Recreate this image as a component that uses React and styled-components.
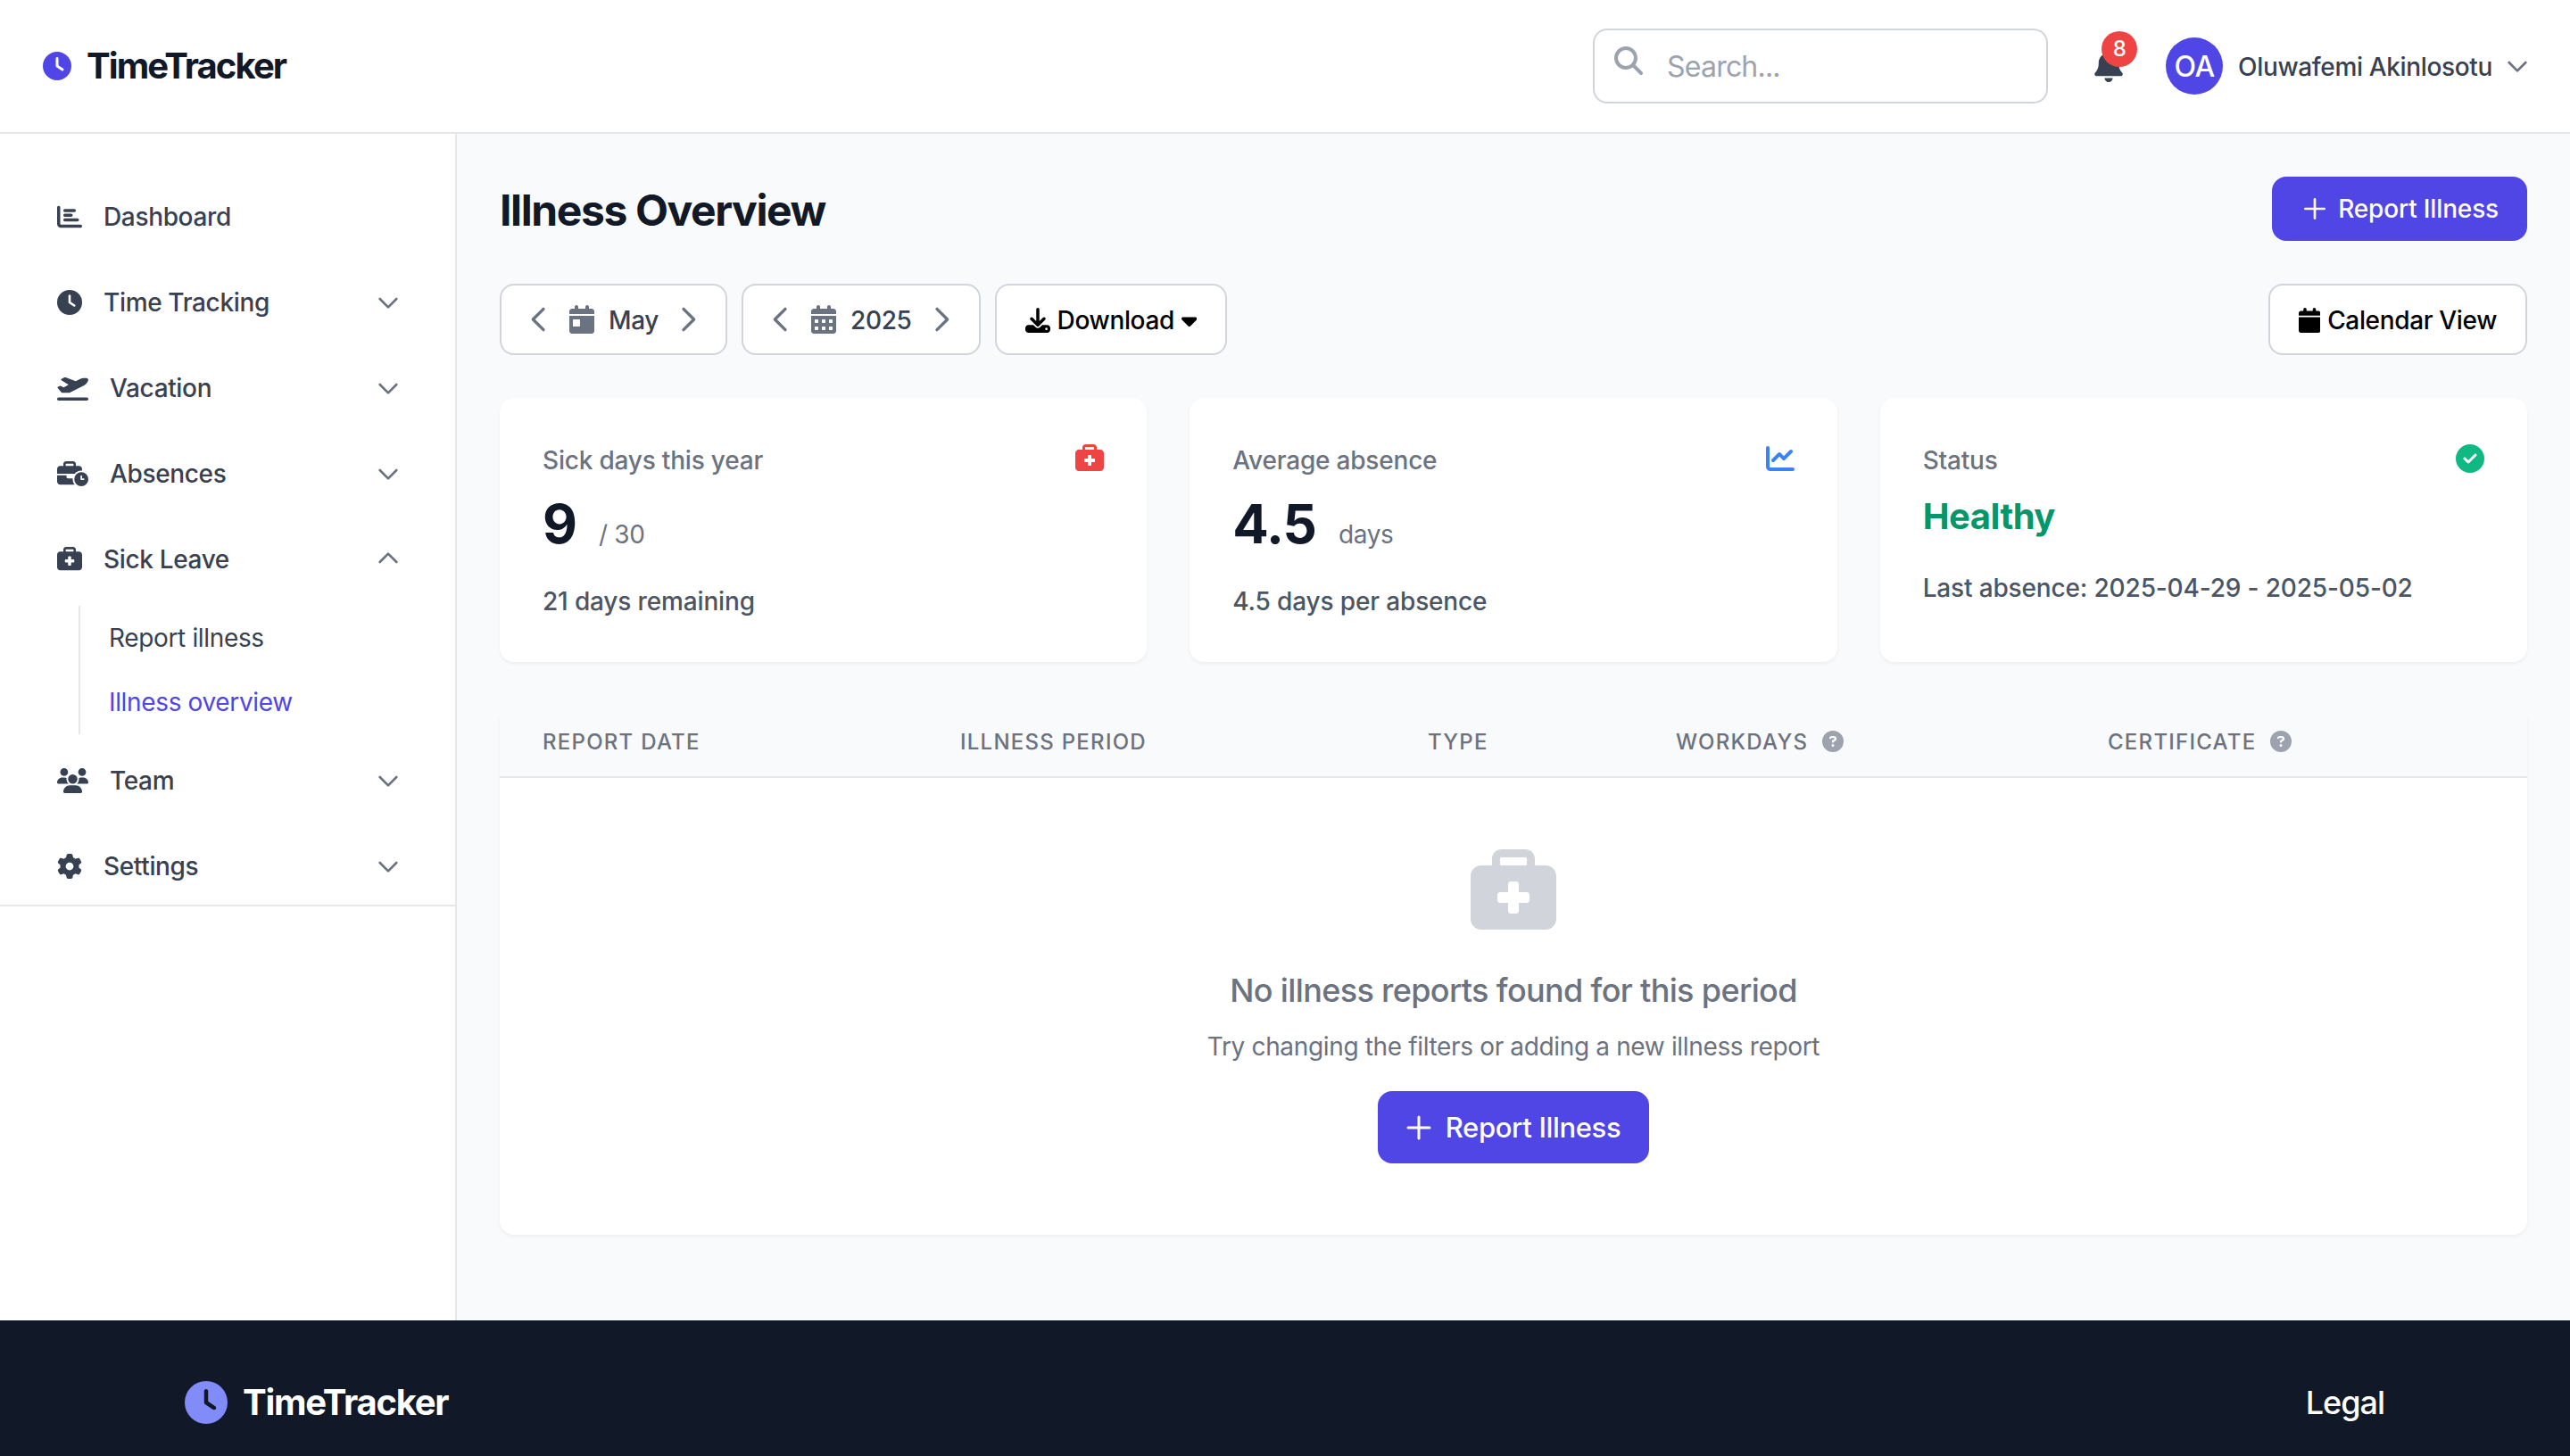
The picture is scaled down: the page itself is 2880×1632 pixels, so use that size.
import React from "react";
import styled, { createGlobalStyle } from "styled-components";
import {
  FaChartBar, FaClock, FaPlaneDeparture, FaBusinessTime, FaBriefcaseMedical, FaUsers, FaGear,
  FaBell, FaMagnifyingGlass, FaCalendarDay, FaCalendarDays, FaDownload, FaCaretDown, FaCalendar,
  FaChartLine, FaCircleCheck, FaCircleQuestion,
} from "react-icons/fa6";
import { HiOutlineChevronDown, HiOutlineChevronUp, HiOutlineChevronLeft, HiOutlineChevronRight, HiOutlinePlus } from "react-icons/hi";

const Global = createGlobalStyle`
  html, body { margin: 0; height: 100%; overflow: hidden; }
  body { font-family: Inter, "Liberation Sans", sans-serif; background: #f9fafb; color: #111827; letter-spacing: -0.35px; }
  #root { height: 100%; }
  * { box-sizing: border-box; }
  button, input { letter-spacing: inherit; }
`;

const Page = styled.div`
  height: 100%;
  display: flex;
  flex-direction: column;
`;

const Header = styled.header`
  flex: none;
  height: 150px;
  background: #fff;
  border-bottom: 2px solid #e5e7eb;
  display: flex;
  align-items: center;
  justify-content: space-between;
  padding: 0 43px 0 48px;
`;

const Logo = styled.div`
  display: flex;
  align-items: center;
  gap: 17px;
  font-size: 40px;
  line-height: 56px;
  font-weight: 700;
  letter-spacing: ${(p) => (p.$footer ? "-1.25px" : "-1.9px")};
  color: ${(p) => (p.$footer ? "#fff" : "#111827")};
  svg {
    width: ${(p) => (p.$footer ? "48px" : "32px")};
    height: ${(p) => (p.$footer ? "48px" : "32px")};
    color: ${(p) => (p.$footer ? "#818cf8" : "#4f46e5")};
  }
`;

const HeaderRight = styled.div`
  display: flex;
  align-items: center;
`;

const SearchBox = styled.label`
  width: 510px;
  height: 84px;
  border: 2px solid #d1d5db;
  border-radius: 16px;
  background: #fff;
  display: flex;
  align-items: center;
  padding-left: 22px;
  gap: 25px;
  svg {
    flex: none;
    width: 32px;
    height: 32px;
    color: #9ca3af;
    margin-bottom: 13px;
  }
`;

const SearchInput = styled.input`
  flex: 1;
  min-width: 0;
  border: 0;
  outline: 0;
  background: none;
  font: 400 32px Inter, sans-serif;
  letter-spacing: -0.8px;
  color: #111827;
  &::placeholder { color: #9ca3af; opacity: 1; }
`;

const BellWrap = styled.div`
  position: relative;
  width: 36px;
  height: 36px;
  margin: 0 46px 0 50px;
  svg { display: block; width: 36px; height: 36px; color: #374151; }
`;

const Badge = styled.span`
  position: absolute;
  top: -21px;
  left: 10px;
  width: 40px;
  height: 40px;
  border-radius: 50%;
  background: #ef4444;
  color: #fff;
  font-size: 24px;
  line-height: 40px;
  font-weight: 500;
  text-align: center;
`;

const Avatar = styled.div`
  width: 64px;
  height: 64px;
  border-radius: 50%;
  background: #4f46e5;
  color: #fff;
  font-size: 32px;
  font-weight: 500;
  display: flex;
  align-items: center;
  justify-content: center;
`;

const UserName = styled.span`
  margin: 2px 12px 0 17px;
  font-size: 28px;
  font-weight: 500;
  color: #374151;
  white-space: nowrap;
`;

const Chevron = styled.span`
  display: flex;
  flex: none;
  margin-top: ${(p) => (p.$up ? "-3px" : "0")};
  color: #6b7280;
  svg { width: 32px; height: 32px; }
`;

const Body = styled.div`
  flex: 1;
  min-height: 0;
  display: flex;
`;

const Sidebar = styled.aside`
  flex: none;
  width: 512px;
  background: #fff;
  border-right: 2px solid #e5e7eb;
`;

const Nav = styled.nav`
  display: flex;
  flex-direction: column;
  gap: 24px;
  padding: 57px 0 7px;
  border-bottom: 2px solid #e5e7eb;
`;

const NavItem = styled.div`
  height: 72px;
  display: flex;
  align-items: center;
  gap: 24px;
  padding: 0 59px 0 64px;
  font-size: 28px;
  font-weight: 500;
  color: #374151;
  svg.nav-icon {
    flex: none;
    height: 28px;
    width: ${(p) => (p.$wide ? "35px" : "28px")};
    color: #374151;
  }
  span.label { flex: 1; }
`;

const SubList = styled.div`
  margin: 16px 0 -8px 88px;
  border-left: 2px solid #e5e7eb;
`;

const SubItem = styled.div`
  height: 72px;
  display: flex;
  align-items: center;
  padding-left: 32px;
  font-size: 28px;
  color: ${(p) => (p.$active ? "#4f46e5" : "#374151")};
`;

const Main = styled.main`
  flex: 1;
  min-width: 0;
  padding: 48px;
  background: #f9fafb;
`;

const TitleRow = styled.div`
  height: 72px;
  display: flex;
  align-items: center;
  justify-content: space-between;
  margin-bottom: 48px;
`;

const Title = styled.h1`
  margin: 3px 0 0;
  font-size: 48px;
  line-height: 64px;
  font-weight: 700;
  letter-spacing: -1.4px;
  color: #111827;
`;

const PrimaryButton = styled.button`
  height: ${(p) => (p.$large ? "81px" : "72px")};
  padding: ${(p) => (p.$large ? "0 32px 0 28px" : "0 32px")};
  border: 0;
  border-radius: 16px;
  background: #4f46e5;
  color: #fff;
  font: 500 ${(p) => (p.$large ? "31px" : "28px")} Inter, sans-serif;
  letter-spacing: ${(p) => (p.$large ? "-0.35px" : "-0.15px")};
  display: inline-flex;
  align-items: center;
  gap: ${(p) => (p.$large ? "12px" : "10px")};
  svg {
    width: ${(p) => (p.$large ? "36px" : "32px")};
    height: ${(p) => (p.$large ? "36px" : "32px")};
  }
`;

const FilterRow = styled.div`
  height: 80px;
  display: flex;
  justify-content: space-between;
  margin-bottom: 48px;
`;

const FilterGroup = styled.div`
  display: flex;
  gap: 16px;
`;

const Stepper = styled.div`
  height: 80px;
  padding: 0 22px;
  border: 2px solid #d1d5db;
  border-radius: 16px;
  background: #fff;
  display: flex;
  align-items: center;
  font-size: 28px;
  font-weight: 500;
  color: #374151;
  svg.cal { flex: none; height: 32px; width: 28px; margin: 0 16px 0 14px; color: #6b7280; }
`;

const StepValue = styled.span`
  margin-right: 13px;
  padding-top: 2px;
`;

const Arrow = styled.button`
  width: 40px;
  height: 40px;
  padding: 0;
  border: 0;
  background: none;
  color: #6b7280;
  svg { display: block; width: 40px; height: 40px; }
`;

const OutlineButton = styled.button`
  height: 80px;
  padding: 2px 32px 0;
  border: 2px solid #d1d5db;
  border-radius: 16px;
  background: #fff;
  color: #000;
  font: 500 28px Inter, sans-serif;
  display: inline-flex;
  align-items: center;
  gap: 8px;
`;

const ButtonIcon = styled.span`
  display: flex;
  flex: none;
  svg { height: 28px; width: ${(p) => p.$w}px; }
`;

const Cards = styled.div`
  display: grid;
  grid-template-columns: repeat(3, 1fr);
  gap: 48px;
  margin-bottom: 50px;
`;

const Card = styled.section`
  height: 296px;
  padding: 48px;
  background: #fff;
  border-radius: 16px;
  box-shadow: 0 2px 4px rgba(0, 0, 0, 0.05);
`;

const CardHead = styled.div`
  height: 40px;
  display: flex;
  justify-content: space-between;
  align-items: flex-start;
  font-size: 28px;
  line-height: 44px;
  font-weight: 500;
  letter-spacing: -0.2px;
  color: #6b7280;
  svg { margin-top: 4px; width: 32px; height: 32px; color: ${(p) => p.$tone}; }
`;

const ValueRow = styled.div`
  height: 72px;
  margin-top: 17px;
  display: flex;
  align-items: baseline;
  gap: 25px;
`;

const Value = styled.span`
  font-size: 60px;
  line-height: 72px;
  font-weight: 700;
  letter-spacing: -1px;
  color: #111827;
`;

const Unit = styled.span`
  font-size: 28px;
  line-height: 40px;
  color: #6b7280;
`;

const Healthy = styled.div`
  margin-top: 17px;
  font-size: 40px;
  line-height: 56px;
  font-weight: 700;
  letter-spacing: -0.5px;
  color: #059669;
`;

const CardNote = styled.div`
  margin-top: ${(p) => (p.$tight ? "32px" : "31px")};
  font-size: 28px;
  line-height: 40px;
  font-weight: 500;
  letter-spacing: -0.15px;
  color: #4b5563;
`;

const Table = styled.section`
  background: #fff;
  border-radius: 16px;
  box-shadow: 0 2px 4px rgba(0, 0, 0, 0.05);
  overflow: hidden;
`;

const TableHead = styled.div`
  height: 80px;
  padding: 0 48px;
  display: grid;
  grid-template-columns: 468px 524px 278px 484px 1fr;
  align-items: center;
  background: #f9fafb;
  border-bottom: 2px solid #e5e7eb;
`;

const HeadCell = styled.div`
  display: flex;
  align-items: center;
  gap: 16px;
  font-size: 24px;
  font-weight: 500;
  letter-spacing: 1.25px;
  text-transform: uppercase;
  color: #6b7280;
  svg { width: 24px; height: 24px; color: #9ca3af; }
`;

const Empty = styled.div`
  padding: 80px 0;
  display: flex;
  flex-direction: column;
  align-items: center;
`;

const EmptyIcon = styled(FaBriefcaseMedical)`
  width: 96px;
  height: 96px;
  color: #d1d5db;
`;

const EmptyTitle = styled.h3`
  margin: 34px 0 0;
  font-size: 36px;
  line-height: 56px;
  font-weight: 500;
  letter-spacing: -0.64px;
  color: #6b7280;
`;

const EmptyText = styled.p`
  margin: 15px 0 30px;
  font-size: 28px;
  line-height: 40px;
  color: #6b7280;
`;

const Footer = styled.footer`
  flex: none;
  height: 152px;
  background: #111827;
  padding: 64px 208px 0 207px;
  display: flex;
  align-items: flex-start;
  justify-content: space-between;
`;

const LegalLink = styled.a`
  font-size: 36px;
  line-height: 56px;
  font-weight: 500;
  letter-spacing: -1px;
  color: #fff;
`;

const navTop = [
  { icon: FaClock, label: "Time Tracking" },
  { icon: FaPlaneDeparture, label: "Vacation", wide: true },
  { icon: FaBusinessTime, label: "Absences", wide: true },
];

function MenuRow({ icon: Icon, label, open, wide, chevron = true }) {
  return (
    <NavItem $wide={wide}>
      <Icon className="nav-icon" />
      <span className="label">{label}</span>
      {chevron && <Chevron $up={open}>{open ? <HiOutlineChevronUp /> : <HiOutlineChevronDown />}</Chevron>}
    </NavItem>
  );
}

function PeriodStepper({ icon: Icon, value }) {
  return (
    <Stepper>
      <Arrow aria-label="previous"><HiOutlineChevronLeft /></Arrow>
      <Icon className="cal" />
      <StepValue>{value}</StepValue>
      <Arrow aria-label="next"><HiOutlineChevronRight /></Arrow>
    </Stepper>
  );
}

export default function App() {
  return (
    <Page>
      <Global />
      <Header>
        <Logo><FaClock />TimeTracker</Logo>
        <HeaderRight>
          <SearchBox>
            <FaMagnifyingGlass />
            <SearchInput placeholder="Search..." />
          </SearchBox>
          <BellWrap>
            <FaBell />
            <Badge>8</Badge>
          </BellWrap>
          <Avatar>OA</Avatar>
          <UserName>Oluwafemi Akinlosotu</UserName>
          <Chevron><HiOutlineChevronDown /></Chevron>
        </HeaderRight>
      </Header>
      <Body>
        <Sidebar>
          <Nav>
            <MenuRow icon={FaChartBar} label="Dashboard" chevron={false} />
            {navTop.map((n) => <MenuRow key={n.label} {...n} />)}
            <div>
              <MenuRow icon={FaBriefcaseMedical} label="Sick Leave" open />
              <SubList>
                <SubItem>Report illness</SubItem>
                <SubItem $active>Illness overview</SubItem>
              </SubList>
            </div>
            <MenuRow icon={FaUsers} label="Team" wide />
            <MenuRow icon={FaGear} label="Settings" />
          </Nav>
        </Sidebar>
        <Main>
          <TitleRow>
            <Title>Illness Overview</Title>
            <PrimaryButton><HiOutlinePlus />Report Illness</PrimaryButton>
          </TitleRow>
          <FilterRow>
            <FilterGroup>
              <PeriodStepper icon={FaCalendarDay} value="May" />
              <PeriodStepper icon={FaCalendarDays} value="2025" />
              <OutlineButton>
                <ButtonIcon $w={28}><FaDownload /></ButtonIcon>
                Download
                <ButtonIcon $w={17.5}><FaCaretDown /></ButtonIcon>
              </OutlineButton>
            </FilterGroup>
            <OutlineButton>
              <ButtonIcon $w={24.5}><FaCalendar /></ButtonIcon>
              Calendar View
            </OutlineButton>
          </FilterRow>
          <Cards>
            <Card>
              <CardHead $tone="#ef4444">Sick days this year<FaBriefcaseMedical /></CardHead>
              <ValueRow><Value>9</Value><Unit>/ 30</Unit></ValueRow>
              <CardNote>21 days remaining</CardNote>
            </Card>
            <Card>
              <CardHead $tone="#3b82f6">Average absence<FaChartLine /></CardHead>
              <ValueRow><Value>4.5</Value><Unit>days</Unit></ValueRow>
              <CardNote>4.5 days per absence</CardNote>
            </Card>
            <Card>
              <CardHead $tone="#10b981">Status<FaCircleCheck /></CardHead>
              <Healthy>Healthy</Healthy>
              <CardNote $tight>Last absence: 2025-04-29 - 2025-05-02</CardNote>
            </Card>
          </Cards>
          <Table>
            <TableHead>
              <HeadCell>Report date</HeadCell>
              <HeadCell>Illness period</HeadCell>
              <HeadCell>Type</HeadCell>
              <HeadCell>Workdays<FaCircleQuestion /></HeadCell>
              <HeadCell>Certificate<FaCircleQuestion /></HeadCell>
            </TableHead>
            <Empty>
              <EmptyIcon />
              <EmptyTitle>No illness reports found for this period</EmptyTitle>
              <EmptyText>Try changing the filters or adding a new illness report</EmptyText>
              <PrimaryButton $large><HiOutlinePlus />Report Illness</PrimaryButton>
            </Empty>
          </Table>
        </Main>
      </Body>
      <Footer>
        <Logo $footer><FaClock />TimeTracker</Logo>
        <LegalLink>Legal</LegalLink>
      </Footer>
    </Page>
  );
}
